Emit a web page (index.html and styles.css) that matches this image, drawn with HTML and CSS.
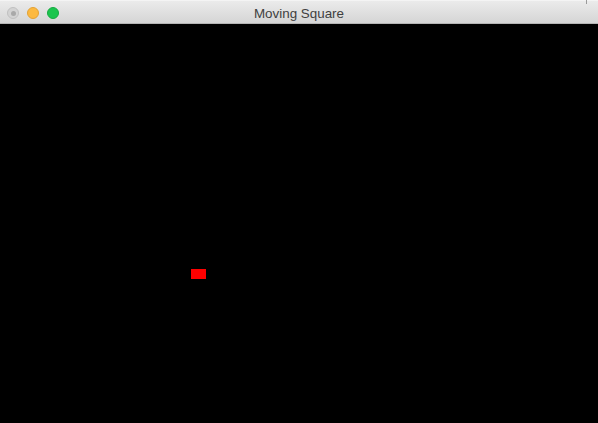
FILE: index.html
```html
<!DOCTYPE html>
<html>
<head>
<meta charset="utf-8">
<link rel="stylesheet" href="styles.css">
</head>
<body>
<div class="window">
  <div class="titlebar">
    <div class="lights">
      <span class="light close"><span class="dot"></span></span>
      <span class="light min"></span>
      <span class="light max"></span>
    </div>
    <div class="title">Moving Square</div>
    <span class="behind"></span>
  </div>
  <div class="canvas">
    <div class="square"></div>
  </div>
</div>
</body>
</html>
```
FILE: styles.css
```css
html, body {
  margin: 0;
  padding: 0;
  width: 598px;
  height: 423px;
  overflow: hidden;
  background: #000;
}
.window {
  display: flex;
  flex-direction: column;
  width: 598px;
  height: 423px;
}
.titlebar {
  position: relative;
  height: 24px;
  flex: 0 0 24px;
  box-sizing: border-box;
  background: linear-gradient(#ebebeb, #d5d5d5);
  border-top: 1px solid #f4f4f4;
  border-bottom: 1px solid #b5b5b5;
  display: flex;
  align-items: center;
  justify-content: center;
}
.lights {
  position: absolute;
  left: 7px;
  top: 6px;
  display: flex;
  gap: 8px;
}
.light {
  width: 12px;
  height: 12px;
  border-radius: 50%;
  box-sizing: border-box;
  display: flex;
  align-items: center;
  justify-content: center;
}
.close {
  background: #d3d3d3;
  border: 1px solid #c0c0c0;
}
.close .dot {
  width: 5px;
  height: 5px;
  border-radius: 50%;
  background: #a9a9a9;
}
.min {
  background: #fcb940;
  border: 1px solid #e4a233;
}
.max {
  background: #1bc54e;
  border: 1px solid #16ab41;
}
.title {
  font-family: "Liberation Sans", Arial, sans-serif;
  font-size: 13.4px;
  color: #3f3f3f;
  margin-top: 2px;
}
.behind {
  position: absolute;
  left: 586px;
  top: -1px;
  width: 1px;
  height: 4px;
  background: #9a9a9a;
}
.canvas {
  position: relative;
  flex: 1;
  background: #000;
}
.square {
  position: absolute;
  left: 191px;
  top: 245px;
  width: 15px;
  height: 10px;
  background: #ff0000;
}
```
